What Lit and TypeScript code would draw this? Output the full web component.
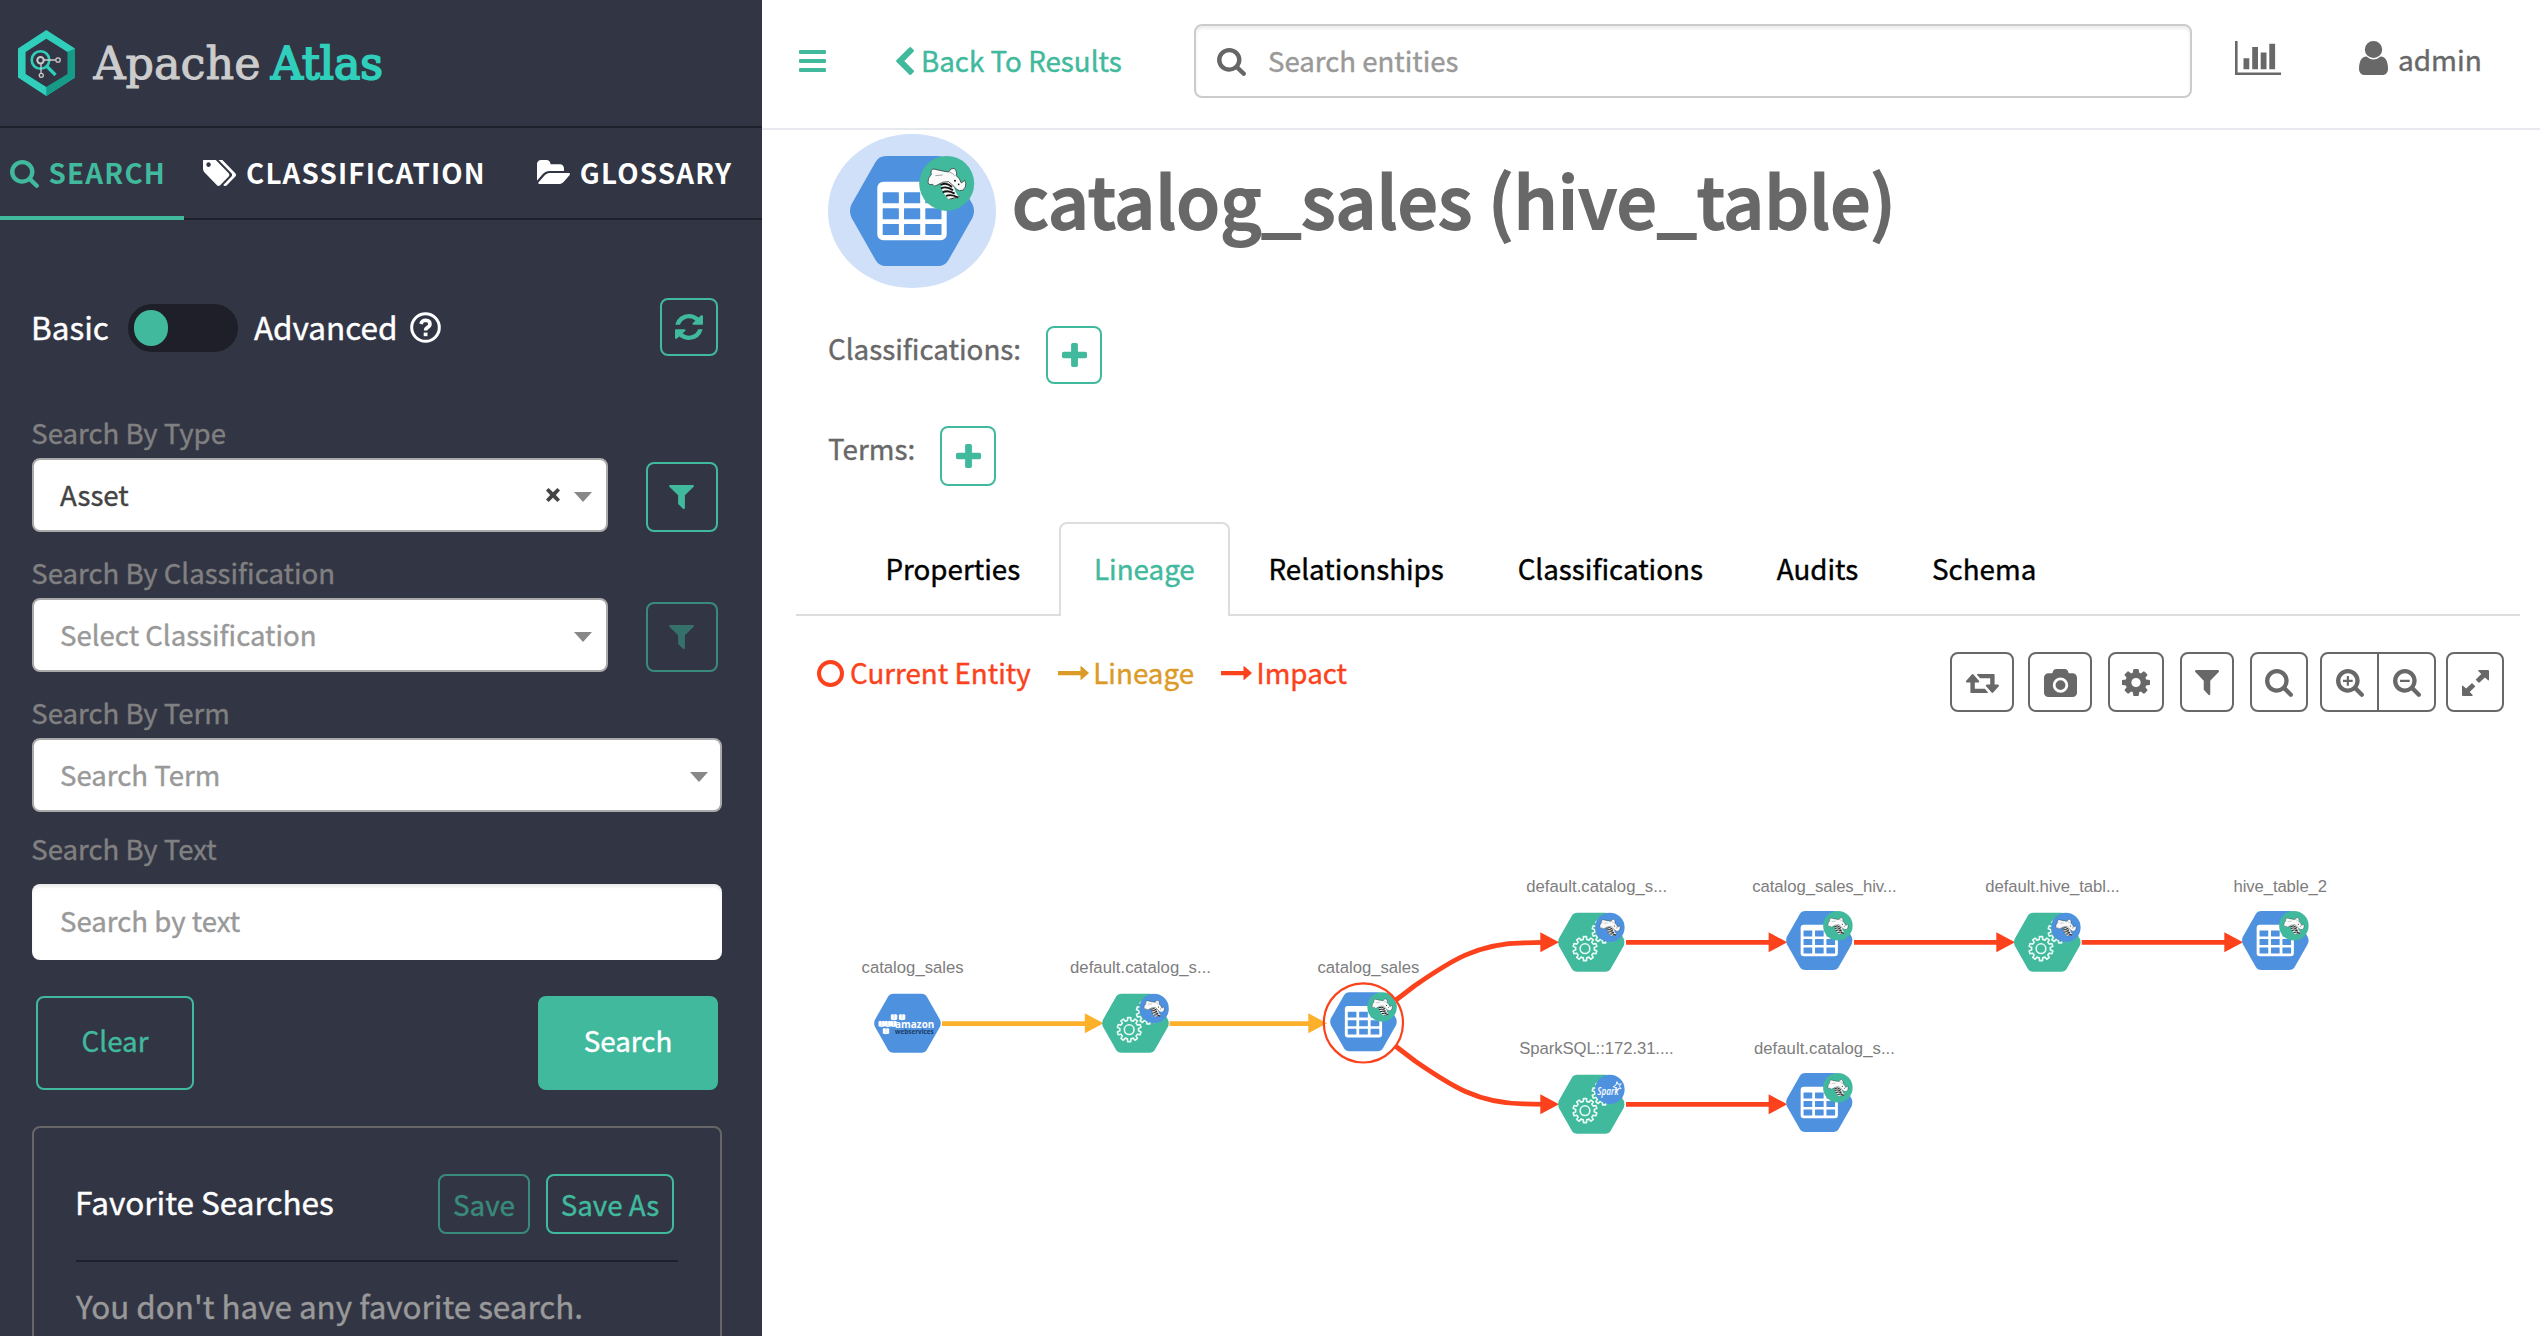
import { LitElement, html, svg, css } from "lit";
import { customElement } from "lit/decorators.js";
import { classMap } from "lit/directives/class-map.js";

interface Glyph { box: string; d: string; }

const GLYPHS: Record<string, Glyph> = {
  search: { box: "64 128 1664 1664", d: "M1216 832q0-185-131.5-316.5t-316.5-131.5-316.5 131.5-131.5 316.5 131.5 316.5 316.5 131.5 316.5-131.5 131.5-316.5zm512 832q0 52-38 90t-90 38q-54 0-90-38l-343-342q-179 124-399 124-143 0-273.5-55.5t-225-150-150-225-55.5-273.5 55.5-273.5 150-225 225-150 273.5-55.5 273.5 55.5 225 150 150 225 55.5 273.5q0 220-124 399l343 343q37 37 37 90z" },
  tags: { box: "128 192 1900 1452", d: "M576 448q0-53-37.5-90.5t-90.5-37.5-90.5 37.5-37.5 90.5 37.5 90.5 90.5 37.5 90.5-37.5 37.5-90.5zm1067 576q0 53-37 90l-491 492q-39 37-91 37-53 0-90-37l-715-716q-38-37-64.5-101t-26.5-117v-416q0-52 38-90t90-38h416q53 0 117 26.5t102 64.5l715 714q37 39 37 91zm384 0q0 53-37 90l-491 492q-39 37-91 37-36 0-59-14t-53-45l470-470q37-37 37-90 0-52-37-91l-715-714q-38-38-102-64.5t-117-26.5h224q53 0 117 26.5t102 64.5l715 714q37 39 37 91z" },
  folder: { box: "0 128 1879 1408", d: "M1879 952q0 31-31 66l-336 396q-43 51-120.5 86.5t-143.5 35.5h-1088q-34 0-60.5-13t-26.5-43q0-31 31-66l336-396q43-51 120.5-86.5t143.5-35.5h1088q34 0 60.5 13t26.5 43zm-343-344v160h-832q-94 0-197 47.5t-164 119.5l-337 396-5 6q0-4-.5-12.5t-.5-12.5v-960q0-92 66-158t158-66h320q92 0 158 66t66 158v32h544q92 0 158 66t66 158z" },
  filter: { box: "192 256 1408 1408", d: "M1595 295q17 41-14 70l-493 493v742q0 42-39 59-13 5-25 5-27 0-45-19l-256-256q-19-19-19-45v-486l-493-493q-31-29-14-70 17-39 59-39h1280q42 0 59 39z" },
  refresh: { box: "128 128 1536 1536", d: "M1639 1056q0 5-1 7-64 268-268 434.5t-478 166.5q-146 0-282.5-55t-243.5-157l-129 129q-19 19-45 19t-45-19-19-45v-448q0-26 19-45t45-19h448q26 0 45 19t19 45-19 45l-137 137q71 66 161 102t187 36q134 0 250-65t186-179q11-17 53-117 8-23 30-23h192q13 0 22.5 9.5t9.5 22.5zm25-800v448q0 26-19 45t-45 19h-448q-26 0-45-19t-19-45 19-45l138-138q-148-137-349-137-134 0-250 65t-186 179q-11 17-53 117-8 23-30 23h-199q-13 0-22.5-9.5t-9.5-22.5v-7q65-268 270-434.5t480-166.5q146 0 284 55.5t245 156.5l130-129q19-19 45-19t45 19 19 45z" },
  plus: { box: "192 128 1408 1408", d: "M1600 736v192q0 40-28 68t-68 28h-416v416q0 40-28 68t-68 28h-192q-40 0-68-28t-28-68v-416h-416q-40 0-68-28t-28-68v-192q0-40 28-68t68-28h416v-416q0-40 28-68t68-28h192q40 0 68 28t28 68v416h416q40 0 68 28t28 68z" },
  camera: { box: "-96 0 1920 1664", d: "M864 672q119 0 203.5 84.5t84.5 203.5-84.5 203.5-203.5 84.5-203.5-84.5-84.5-203.5 84.5-203.5 203.5-84.5zm704-416q106 0 181 75t75 181v896q0 106-75 181t-181 75h-1408q-106 0-181-75t-75-181v-896q0-106 75-181t181-75h224l51-136q19-49 69.5-84.5t103.5-35.5h512q53 0 103.5 35.5t69.5 84.5l51 136h224zm-704 1152q185 0 316.5-131.5t131.5-316.5-131.5-316.5-316.5-131.5-316.5 131.5-131.5 316.5 131.5 316.5 316.5 131.5z" },
  cog: { box: "128 128 1536 1536", d: "M1152 896q0-106-75-181t-181-75-181 75-75 181 75 181 181 75 181-75 75-181zm512-109v222q0 12-8 23t-20 13l-185 28q-19 54-39 91 35 50 107 138 10 12 10 25t-9 23q-27 37-99 108t-94 71q-12 0-26-9l-138-108q-44 23-91 38-16 136-29 186-7 28-36 28h-222q-14 0-24.5-8.5t-11.5-21.5l-28-184q-49-16-90-37l-141 107q-10 9-25 9-14 0-25-11-126-114-165-168-7-10-7-23 0-12 8-23 15-21 51-66.5t54-70.5q-27-50-41-99l-183-27q-13-2-21-12.5t-8-23.5v-222q0-12 8-23t19-13l186-28q14-46 39-92-40-57-107-138-10-12-10-24 0-10 9-23 26-36 98.5-107.5t94.5-71.5q13 0 26 10l138 107q44-23 91-38 16-136 29-186 7-28 36-28h222q14 0 24.5 8.5t11.5 21.5l28 184q49 16 90 37l142-107q9-9 24-9 13 0 25 10 129 119 165 170 7 8 7 22 0 12-8 23-15 21-51 66.5t-54 70.5q26 50 41 98l183 28q13 2 21 12.5t8 23.5z" },
  retweet: { box: "0 256 1920 1280", d: "M1280 1504q0 13-9.5 22.5t-22.5 9.5h-960q-8 0-13.5-2t-9-7-5.5-8-3-11.5-1-11.5v-600h-192q-26 0-45-19t-19-45q0-24 15-41l320-384q19-22 49-22t49 22l320 384q15 17 15 41 0 26-19 45t-45 19h-192v384h576q16 0 25 11l160 192q7 10 7 21zm640-416q0 24-15 41l-320 384q-20 23-49 23t-49-23l-320-384q-15-17-15-41 0-26 19-45t45-19h192v-384h-576q-16 0-25-12l-160-192q-7-9-7-20 0-13 9.5-22.5t22.5-9.5h960q8 0 13.5 2t9 7 5.5 8 3 11.5 1 11.5v600h192q26 0 45 19t19 45z" },
  user: { box: "256 128 1280 1536", d: "M1536 1399q0 109-62.5 187t-150.5 78h-854q-88 0-150.5-78t-62.5-187q0-85 8.5-160.5t31.5-152 58.5-131 94-89 134.5-34.5q131 128 313 128t313-128q76 0 134.5 34.5t94 89 58.5 131 31.5 152 8.5 160.5zm-256-887q0 159-112.5 271.5t-271.5 112.5-271.5-112.5-112.5-271.5 112.5-271.5 271.5-112.5 271.5 112.5 112.5 271.5z" },
  bars: { box: "0 0 27 22", d: "M1 0h25q1 0 1 1v2q0 1-1 1h-25q-1 0-1-1v-2q0-1 1-1zM1 9h25q1 0 1 1v2q0 1-1 1h-25q-1 0-1-1v-2q0-1 1-1zM1 18h25q1 0 1 1v2q0 1-1 1h-25q-1 0-1-1v-2q0-1 1-1z" },
  chevron: { box: "0 0 18 28", d: "M13.2.5q1-1 2 0l2.3 2.2q1 1 0 2L8.3 14l9.2 9.3q1 1 0 2l-2.3 2.2q-1 1-2 0L.6 15q-1-1 0-2z" },
  chart: { box: "0 0 46 34", d: "M0 0h2.6v31.4h43.4v2.6h-46zM8.5 17.3h5.8v11h-5.8zM17.2 6h5.8v22.3h-5.8zM25.7 11.5h5.8v16.8h-5.8zM34.3 2.8h5.8v25.5h-5.8z" },
  arrow: { box: "0 0 31 14", d: "M0 4.9h22.5v-4.3q0-.8.8-.3l7.2 6.2q.6.6 0 1.1l-7.2 6.2q-.8.5-.8-.3v-4.3h-22.5z" },
  zoomIn: { box: "64 128 1664 1664", d: "M1216 832q0-185-131.5-316.5t-316.5-131.5-316.5 131.5-131.5 316.5 131.5 316.5 316.5 131.5 316.5-131.5 131.5-316.5zm512 832q0 52-38 90t-90 38q-54 0-90-38l-343-342q-179 124-399 124-143 0-273.5-55.5t-225-150-150-225-55.5-273.5 55.5-273.5 150-225 225-150 273.5-55.5 273.5 55.5 225 150 150 225 55.5 273.5q0 220-124 399l343 343q37 37 37 90zM704 544h128v224h224v128h-224v224h-128v-224h-224v-128h224z" },
  zoomOut: { box: "64 128 1664 1664", d: "M1216 832q0-185-131.5-316.5t-316.5-131.5-316.5 131.5-131.5 316.5 131.5 316.5 316.5 131.5 316.5-131.5 131.5-316.5zm512 832q0 52-38 90t-90 38q-54 0-90-38l-343-342q-179 124-399 124-143 0-273.5-55.5t-225-150-150-225-55.5-273.5 55.5-273.5 150-225 225-150 273.5-55.5 273.5 55.5 225 150 150 225 55.5 273.5q0 220-124 399l343 343q37 37 37 90zM480 768h576v128h-576z" },
  expand: { box: "0 0 27 27", d: "M17 0h9q1 0 1 1v9q0 1.4-1.2.5l-2.9-2.8-5.4 5.3q-.5.5-1 0l-2.5-2.5q-.5-.5 0-1l5.3-5.4-2.8-2.9q-.9-1.2.5-1.2zM10 27h-9q-1 0-1-1v-9q0-1.4 1.2-.5l2.9 2.8 5.4-5.3q.5-.5 1 0l2.5 2.5q.5.5 0 1l-5.3 5.4 2.8 2.9q.9 1.2-.5 1.2z" },
  caret: { box: "0 0 18 10", d: "M0 0h18l-9 10z" },
  cross: { box: "0 0 14 14", d: "M0 2.6l2.6-2.6 4.4 4.2 4.4-4.2 2.6 2.6-4.2 4.4 4.2 4.4-2.6 2.6-4.4-4.2-4.4 4.2-2.6-2.6 4.2-4.4z" },
};

const icon = (name: string, w: number, h: number, cls = "") => html`<svg
  class="icon ${cls}" width=${w} height=${h} viewBox=${GLYPHS[name].box}
  preserveAspectRatio="none"><path d=${GLYPHS[name].d}></path></svg>`;

/** Outline of a toothed wheel centred on (cx, cy). */
function gear(cx: number, cy: number, outer: number, inner: number, teeth: number): string {
  const pts: string[] = [];
  const step = (Math.PI * 2) / teeth;
  const at = (r: number, a: number) =>
    `${(cx + r * Math.cos(a)).toFixed(2)} ${(cy + r * Math.sin(a)).toFixed(2)}`;
  for (let i = 0; i < teeth; i++) {
    const a = i * step - Math.PI / 2;
    pts.push(at(inner, a - step * 0.3), at(outer, a - step * 0.2), at(outer, a + step * 0.2), at(inner, a + step * 0.3));
  }
  return `M${pts.join("L")}Z`;
}

const HEX = "M36 0H88Q95 0 98.5 6L122.6 48.5Q125.4 55 122.6 61.5L98.5 104Q95 110 88 110H36Q29 110 25.5 104L1.4 61.5Q-1.4 55 1.4 48.5L25.5 6Q29 0 36 0Z";
const BLUE = "#4e91df";
const GREEN = "#41b99d";

const bee = () => svg`<g transform="translate(-30 -31) scale(.3333)">
  <path d="M362 172Q380 160 402 180Q404 204 418 216L388 224Q364 206 362 172Z" fill="#f4f4f4"></path>
  <path d="M362 180Q380 170 396 186M363 190Q380 182 399 196M368 202Q384 194 404 206M378 213Q394 206 414 218" fill="none" stroke="#151515" stroke-width="5.5"></path>
  <path d="M388 223L418 215" fill="none" stroke="#333" stroke-width="3"></path>
  <path d="M324 174Q322 160 334 148Q330 133 342 132Q364 138 386 141Q392 128 402 130Q412 136 409 152Q420 160 424 174L434 166Q440 174 436 186Q430 200 418 197Q408 194 402 184L386 170Q368 168 352 180Q342 188 338 178Q328 182 324 174Z" fill="#fafafa" stroke="#2b3c38" stroke-width="2.4"></path>
  <path d="M346 152L368 150M388 141Q398 144 404 152" fill="none" stroke="#777" stroke-width="2"></path>
  <circle cx="405" cy="167" r="3" fill="#151515"></circle><circle cx="416" cy="178" r="2.6" fill="#151515"></circle>
</g>`;

const tableGlyph = () => svg`<path d=${HEX} fill=${BLUE}></path>
  <rect x="27.3" y="25.7" width="69.4" height="58.6" rx="6" fill="#fff"></rect>
  ${[36.3, 52.3, 68].map(y => [32.7, 54, 75.3].map(x => svg`<rect x=${x} y=${y} width="16.2" height="11" rx=".6" fill=${BLUE}></rect>`))}
  <circle cx="96.7" cy="27.4" r="27.5" fill=${GREEN}></circle>${bee()}`;

const processGlyph = (badge: unknown) => svg`<path d=${HEX} fill=${GREEN}></path>
  <g fill="none" stroke="#e9fbf5" stroke-width="3" stroke-linejoin="round">
    <path d=${gear(50.3, 67, 22.5, 17.5, 10)}></path><circle cx="50.3" cy="67" r="9"></circle>
    <path d=${gear(86, 34, 22.5, 17.5, 10)}></path>
  </g>
  <circle cx="96.7" cy="27.4" r="27.5" fill=${BLUE}></circle>${badge}`;

const sparkBadge = () => svg`
  <text x="73" y="37.5" class="spark" textLength="40" lengthAdjust="spacingAndGlyphs">Spark</text>
  <path d="M110 13l1.8 5 6-1-3.6 4.6 3.4 4.4-5.4-.6-3.4 4.4-.8-5.6-5.4-1.8 5.2-2.6z" fill="none" stroke="#fff" stroke-width="1.8"></path>`;

const awsGlyph = () => svg`<path d=${HEX} fill=${BLUE}></path>
  ${[[31, 38], [46, 38], [8, 50.5], [19.5, 50.5], [30, 50.5], [16, 64]].map(([x, y]) => svg`<path d="M${x} ${y + 1.5}l3-1.5 3 1.2 3-1.2 3 1.5v8.5l-6 1.5-6-1.5z" fill="#fff"></path><path d="M${x + 6} ${y + 2}v8" stroke="#a9c9f0" stroke-width="1"></path>`)}
  <text x="39" y="63.5" class="amazon" textLength="73" lengthAdjust="spacingAndGlyphs">amazon</text>
  <text x="39" y="75" class="webservices" textLength="72" lengthAdjust="spacingAndGlyphs">webservices</text>`;

type Kind = "aws" | "table" | "hive" | "spark";
const NODES: { kind: Kind; x: number; y: number; label: string; lx: number; ly: number; lw: number }[] = [
  { kind: "aws", x: 874.2, y: 993.7, label: "catalog_sales", lx: 861.6, ly: 972.7, lw: 102 },
  { kind: "hive", x: 1102.2, y: 993.7, label: "default.catalog_s...", lx: 1070, ly: 972.7, lw: 141 },
  { kind: "table", x: 1330.2, y: 992.2, label: "catalog_sales", lx: 1317.4, ly: 972.7, lw: 102 },
  { kind: "hive", x: 1558, y: 912.7, label: "default.catalog_s...", lx: 1526.2, ly: 892, lw: 141 },
  { kind: "table", x: 1786, y: 911, label: "catalog_sales_hiv...", lx: 1752.2, ly: 892, lw: 144.5 },
  { kind: "hive", x: 2014, y: 912.7, label: "default.hive_tabl...", lx: 1985.2, ly: 892, lw: 134.5 },
  { kind: "table", x: 2242, y: 911, label: "hive_table_2", lx: 2233.6, ly: 892, lw: 93.4 },
  { kind: "spark", x: 1558, y: 1074.7, label: "SparkSQL::172.31....", lx: 1519.2, ly: 1054, lw: 154.5 },
  { kind: "table", x: 1786, y: 1073, label: "default.catalog_s...", lx: 1753.9, ly: 1054, lw: 141 },
];

const EDGES: { d: string; tip: [number, number]; kind: "lineage" | "impact" }[] = [
  { d: "M942 1023.7H1087", tip: [1103.5, 1023.3], kind: "lineage" },
  { d: "M1169.5 1023.7H1310", tip: [1327, 1023.3], kind: "lineage" },
  { d: "M1396 1000L1415 985.5C1448 963,1476 943,1524 942.8L1544 942.3", tip: [1559, 942.3], kind: "impact" },
  { d: "M1396 1046.5L1415 1061C1448 1083.5,1476 1103.6,1524 1103.8L1544 1104.3", tip: [1559, 1104.3], kind: "impact" },
  { d: "M1626 942.3H1770", tip: [1787.3, 942.3], kind: "impact" },
  { d: "M1854 942.3H1998", tip: [2015, 942.3], kind: "impact" },
  { d: "M2081.7 942.3H2226", tip: [2243, 942.3], kind: "impact" },
  { d: "M1626 1104.3H1770", tip: [1787.3, 1104.3], kind: "impact" },
];

@customElement("lineage-graph")
class LineageGraph extends LitElement {
  static styles = css`
    :host { display: block; -webkit-text-stroke: 0; }
    svg { display: block; }
    .lineage { stroke: #fdb02a; fill: #fdb02a; }
    .impact { stroke: #fb421c; fill: #fb421c; }
    .line { fill: none; stroke-width: 4.8; }
    .head { stroke: none; }
    .ring { fill: none; stroke: #fb421c; stroke-width: 2.2; }
    .label { font: 16.7px "Liberation Sans", Arial, sans-serif; fill: #7d7d7d; }
    .spark { font: italic 600 18.5px "Open Sans", sans-serif; fill: #fff; }
    .amazon { font: bold 20px "Open Sans", sans-serif; fill: #fff; }
    .webservices { font: bold 13px "Open Sans", sans-serif; fill: #1c3c66; }
  `;
  private glyph(kind: Kind) {
    if (kind === "aws") return awsGlyph();
    if (kind === "table") return tableGlyph();
    return processGlyph(kind === "hive" ? bee() : sparkBadge());
  }
  render() {
    return html`<svg width="1778" height="624" viewBox="762 712 1778 624">
      ${EDGES.map(e => svg`<path class="line ${e.kind}" d=${e.d}></path>
        <path class="head ${e.kind}" d="M${e.tip[0]} ${e.tip[1]}l-18.7 -10v20z"></path>`)}
      <circle cx="1363.4" cy="1022.9" r="39.4" fill="#fff" stroke="none"></circle>
      <path d="M1322 1021.5l5.5 1.8-5.5 1.8z" class="head lineage"></path>
      ${NODES.map(n => svg`<g transform="translate(${n.x} ${n.y}) scale(.5365)">${this.glyph(n.kind)}</g>
        <text class="label" x=${n.lx} y=${n.ly} textLength=${n.lw}>${n.label}</text>`)}
      <circle class="ring" cx="1363.4" cy="1022.9" r="39.6"></circle>
    </svg>`;
  }
}

const base = css`
  :host { font-family: "Noto Sans CJK SC", sans-serif; font-size: 27.75px; line-height: 40px; -webkit-text-stroke: .4px; }
  * { box-sizing: border-box; }
  .icon { display: block; flex: none; fill: currentColor; }
  button { font: inherit; margin: 0; padding: 0; background: none; display: flex; align-items: center; justify-content: center; flex: none; }
`;

@customElement("side-panel")
class SidePanel extends LitElement {
  static styles = [base, css`
    :host { display: flex; flex-direction: column; width: 762px; height: 1336px; background: #323544; color: #fff; overflow: hidden; }
    .brand { height: 128px; flex: none; border-bottom: 2px solid #1e212b; padding: 30px 0 0 18px; }
    .brand svg { display: block; }
    .word { font-family: "DejaVu Serif", serif; font-size: 45px; }
    .tabs { display: flex; height: 92px; flex: none; border-bottom: 2px solid #1e212b; font-weight: 700; letter-spacing: 1.2px; -webkit-text-stroke: 0; }
    .tab { display: flex; align-items: center; height: 92px; line-height: 88px; }
    .tab.search { width: 184px; padding-left: 10px; gap: 9.5px; color: #41b99d; border-bottom: 4px solid #41b99d; }
    .tab.search .icon { margin-top: 4px; }
    .tab.class { padding: 0 0 4px 19px; gap: 10px; }
    .tab.class .icon { margin-top: 2px; }
    .tab.gloss { padding: 0 0 4px 51px; gap: 10px; }
    .form { padding: 78px 40px 0 32px; flex: none; }
    .mode { display: flex; align-items: center; height: 58px; font-size: 31.5px; padding-right: 4px; margin-bottom: 56px; }
    .mode span { position: relative; top: -1px; left: -1px; }
    .toggle { width: 110px; height: 48px; border-radius: 24px; background: #1e1f29; padding: 6px; margin: 2px 17px 0 18px; }
    .knob { width: 34px; height: 36px; border-radius: 18px; background: #41b99d; }
    .help { margin-left: 11px; }
    .outline { border: 2px solid #41b99d; border-radius: 8px; color: #41b99d; }
    .outline.off { border-color: #398a7b; color: #398a7b; }
    .outline.off .icon { opacity: .7; }
    .refresh { width: 58px; height: 58px; margin-left: auto; }
    .label { color: #808080; height: 40px; margin: 0 0 6px -.8px; font-size: 27.6px; }
    .row { display: flex; align-items: flex-end; justify-content: space-between; padding-right: 4px; margin-bottom: 20px; }
    .select { width: 576px; height: 74px; background: #fff; border: 2px solid #aaa; border-radius: 8px; color: #444; display: flex; align-items: center; padding: 0 14px 0 26px; font-size: 27.6px; }
    .select.wide { width: 690px; padding-right: 12px; }
    .row.full { padding-right: 0; margin-bottom: 16px; }
    .select span { margin-right: auto; position: relative; top: -1px; }
    .hint { color: #999; }
    .caret { color: #888; margin: 4px 0 0 14px; }
    .filter { width: 72px; height: 70px; }
    .filter .icon { margin-right: 1px; }
    .label.text { margin-bottom: 16px; }
    .input { height: 76px; background: #fff; border-radius: 8px; color: #999; padding: 16px 28px 0; box-shadow: inset 0 3px 3px rgba(0,0,0,.08); font-size: 27.6px; }
    .actions { display: flex; justify-content: space-between; padding: 36px 4px 36px; }
    .actions button { height: 94px; }
    .clear { width: 158px; }
    .go { width: 180px; background: #41b99d; border: 0; border-radius: 8px; color: #fff; }
    .actions span, .save span { position: relative; top: -3px; }
    .fav { border: 2px solid #666; border-radius: 8px; height: 400px; padding: 46px 42px; }
    .favhead { display: flex; align-items: center; height: 60px; padding-right: 4px; }
    .favhead h2 { font: inherit; font-size: 31.5px; margin: 0 auto 6px -1px; }
    .save { height: 60px; font-size: 27.75px; }
    .save span { top: 0; }
    .rule { height: 2px; background: #1e212b; margin: 26px 0 21px; }
    .none { font-size: 31.4px; line-height: 46px; color: #999; white-space: nowrap; }
  `];
  private picker(label: string, text: string, opts: { set?: boolean; wide?: boolean; off?: boolean } = {}) {
    return html`<div class="label">${label}</div>
      <div class=${classMap({ row: true, full: !!opts.wide })}>
        <div class=${classMap({ select: true, wide: !!opts.wide })}>
          <span class=${classMap({ hint: !opts.set })}>${text}</span>
          ${opts.set ? icon("cross", 14, 14) : ""}${icon("caret", 18, 10, "caret")}
        </div>
        ${opts.wide ? "" : html`<button class=${classMap({ outline: true, filter: true, off: !!opts.off })}>${icon("filter", 25, 24)}</button>`}
      </div>`;
  }
  render() {
    return html`
      <div class="brand"><svg width="380" height="70" viewBox="18 30 380 70">
        <path d="M46.3 30L75 48.5V77.5L46.3 96L18 77.5V48.5Z" fill="#2fcfbb"></path>
        <path d="M75 48.5V77.5L46.3 96V87L67 73.5V52Z" fill="#159b88"></path>
        <path d="M46.3 38.7L67.5 52V74L46.3 87L25.6 74V52Z" fill="#323544"></path>
        <circle cx="40.5" cy="60" r="8.8" fill="none" stroke="#2fcfbb" stroke-width="2.6"></circle>
        <path d="M47 66.5L55.5 75" stroke="#2fcfbb" stroke-width="3.2"></path>
        <g fill="none" stroke="#ccc" stroke-width="1.3"><circle cx="40.5" cy="60.3" r="3.2" stroke-width="2"></circle><path d="M44 60H55.5M41 64V73"></path><circle cx="58" cy="60" r="2.2"></circle><circle cx="41.3" cy="75.3" r="2"></circle></g>
        <text class="word" x="93.5" y="79.3" fill="#ccc" stroke="#ccc" stroke-width="1" textLength="167" lengthAdjust="spacingAndGlyphs">Apache</text>
        <text class="word" x="271" y="79.3" fill="#2fcfbb" stroke="#2fcfbb" stroke-width="2" textLength="112" lengthAdjust="spacingAndGlyphs">Atlas</text>
      </svg></div>
      <div class="tabs">
        <div class="tab search">${icon("search", 29, 28)}<span>SEARCH</span></div>
        <div class="tab class">${icon("tags", 33, 26)}<span>CLASSIFICATION</span></div>
        <div class="tab gloss">${icon("folder", 33, 24)}<span>GLOSSARY</span></div>
      </div>
      <div class="form">
        <div class="mode"><span>Basic</span><div class="toggle"><div class="knob"></div></div><span>Advanced</span>
          <svg class="help" width="31" height="31" viewBox="0 0 31 31" fill="none" stroke="#fff"><circle cx="15.5" cy="15.5" r="13.8" stroke-width="3"></circle><path d="M10.9 12Q12 8.3 15.6 8.3Q20 8.6 20 12Q20 14 17.6 15.4Q15.6 16.6 15.6 18.6" stroke-width="3.6"></path><path d="M15.6 20.6V24.2" stroke-width="3.8"></path></svg>
          <button class="outline refresh">${icon("refresh", 28, 26)}</button>
        </div>
        ${this.picker("Search By Type", "Asset", { set: true })}
        ${this.picker("Search By Classification", "Select Classification", { off: true })}
        ${this.picker("Search By Term", "Search Term", { wide: true })}
        <div class="label text">Search By Text</div>
        <div class="input">Search by text</div>
        <div class="actions"><button class="outline clear"><span>Clear</span></button><button class="go"><span>Search</span></button></div>
        <div class="fav">
          <div class="favhead"><h2>Favorite Searches</h2>
            <button class="outline save off" style="width:92px;margin-right:16px"><span>Save</span></button>
            <button class="outline save" style="width:128px"><span>Save As</span></button></div>
          <div class="rule"></div>
          <div class="none">You don't have any favorite search.</div>
        </div>
      </div>`;
  }
}

const TABS = ["Properties", "Lineage", "Relationships", "Classifications", "Audits", "Schema"];
const TOOLS: { gap: number; w: number; icons: [string, number, number][] }[] = [
  { gap: 0, w: 64, icons: [["retweet", 33, 21]] },
  { gap: 14, w: 64, icons: [["camera", 33, 28]] },
  { gap: 16, w: 56, icons: [["cog", 28, 27]] },
  { gap: 16, w: 54, icons: [["filter", 24, 25]] },
  { gap: 16, w: 58, icons: [["search", 28, 28]] },
  { gap: 12, w: 116, icons: [["zoomIn", 28, 28], ["zoomOut", 28, 28]] },
  { gap: 10, w: 58, icons: [["expand", 27, 26]] },
];

@customElement("app-root")
class AppRoot extends LitElement {
  static styles = [base, css`
    :host { display: grid; grid-template-columns: 762px 1778px; height: 1336px; background: #fff; color: #686868; overflow: hidden; }
    .top { display: flex; align-items: center; height: 130px; border-bottom: 2px solid #e8e8ef; padding: 0 58px 6px 37px; }
    .green { color: #41b99d; }
    .back { display: flex; align-items: center; gap: 7px; margin-left: 70px; width: 298px; flex: none; }
    .back span, .find span { padding-bottom: 2px; }
    .find { width: 998px; flex: none; height: 74px; border: 2px solid #ccc; border-radius: 8px; display: flex; align-items: center; padding-left: 21px; gap: 22px; box-shadow: inset 0 3px 3px rgba(0,0,0,.07); color: #999; font-size: 27.6px; }
    .find .icon { color: #666; margin-top: 2px; }
    .chart { margin: -6px 78px 0 43px; }
    .user { margin: -6px 10px 0 0; }
    .admin { font-size: 28px; padding-bottom: 4px; }
    .entity { display: flex; padding: 4px 0 0 66px; height: 158px; }
    .entity svg { display: block; }
    h1 { margin: -1px 0 0 16px; font-weight: 500; font-size: 71.2px; line-height: 130px; -webkit-text-stroke: 1.8px #686868; }
    .prop { display: flex; padding-left: 66px; line-height: 44px; }
    .add { width: 56px; height: 58px; margin-left: 25px; border: 2px solid #41b99d; border-radius: 8px; color: #41b99d; padding-bottom: 1px; }
    .first { margin-top: 38px; height: 100px; }
    .second .add { height: 60px; }
    .tabs { display: flex; gap: 3.8px; margin: 36px 20px 0 34px; padding-left: 54.5px; height: 94px; border-bottom: 2px solid #ddd; color: #000; }
    .tab { height: 94px; padding: 0 33px; border: 2px solid transparent; border-bottom: 0; line-height: 88px; }
    .tab.on { color: #41b99d; border-color: #ddd; border-radius: 8px 8px 0 0; background: #fff; }
    .bar { display: flex; justify-content: space-between; padding: 36px 36px 0 55px; height: 96px; }
    .legend { display: flex; align-items: center; height: 40px; color: #fb421c; }
    .legend .arr { margin: 2px 4.5px 0 27px; }
    .legend .gold { color: #dc9a27; }
    .dot { width: 27px; height: 27px; border: 4px solid #fb421c; border-radius: 50%; margin: 2px 6px 0 0; }
    .tools { display: flex; }
    .tool { display: flex; height: 60px; border: 2px solid #686868; border-radius: 8px; }
    .cell { flex: 1; display: flex; align-items: center; justify-content: center; padding-top: 1.5px; }
    .cell + .cell { border-left: 2px solid #686868; }
  `];
  render() {
    return html`
      <side-panel></side-panel>
      <main>
        <div class="top">
          ${icon("bars", 27, 22, "green")}
          <div class="back green">${icon("chevron", 18, 28)}<span>Back To Results</span></div>
          <div class="find">${icon("search", 29, 28)}<span>Search entities</span></div>
          ${icon("chart", 46, 34, "chart")}${icon("user", 29, 34, "user")}<span class="admin">admin</span>
        </div>
        <div class="entity">
          <svg width="168" height="154" viewBox="0 0 168 154"><ellipse cx="84" cy="77" rx="84" ry="77" fill="#cfe0f8"></ellipse>
            <g transform="translate(22 22)">${tableGlyph()}</g></svg>
          <h1>catalog_sales (hive_table)</h1>
        </div>
        <div class="prop first">Classifications:<button class="add">${icon("plus", 25, 24)}</button></div>
        <div class="prop second">Terms:<button class="add">${icon("plus", 25, 24)}</button></div>
        <div class="tabs">${TABS.map(t => html`<div class=${classMap({ tab: true, on: t === "Lineage" })}>${t}</div>`)}</div>
        <div class="bar">
          <div class="legend"><div class="dot"></div>Current Entity
            ${icon("arrow", 31, 14, "arr gold")}<span class="gold">Lineage</span>
            ${icon("arrow", 31, 14, "arr")}<span>Impact</span></div>
          <div class="tools">${TOOLS.map(t => html`<div class="tool" style="width:${t.w}px;margin-left:${t.gap}px">
            ${t.icons.map(i => html`<div class="cell">${icon(...i)}</div>`)}</div>`)}</div>
        </div>
        <lineage-graph></lineage-graph>
      </main>`;
  }
}
